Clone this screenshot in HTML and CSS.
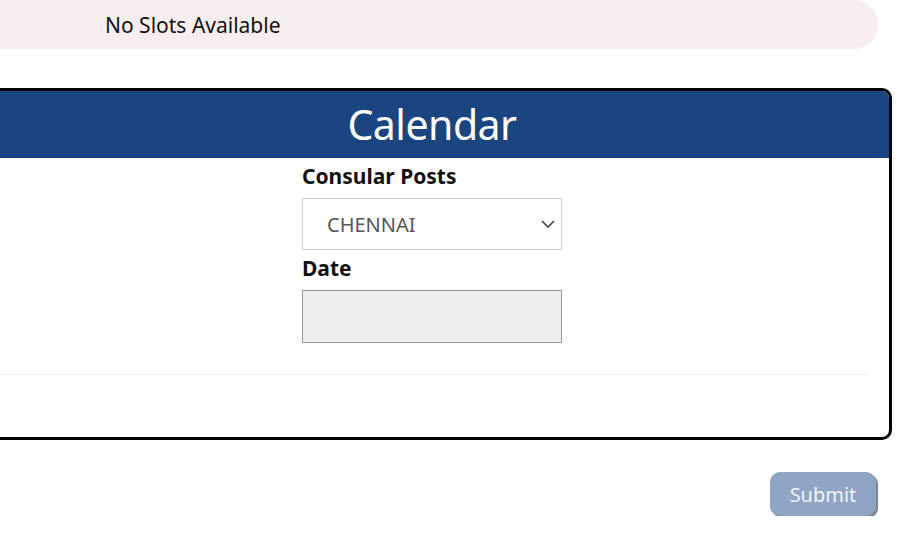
FILE: index.html
```html
<!DOCTYPE html>
<html lang="en">
<head>
  <meta charset="UTF-8" />
  <meta name="viewport" content="width=device-width, initial-scale=1.0"/>
  <title>Calendar</title>
  <link rel="stylesheet" href="styles.css">
</head>
<body>
  <div class="page">
    <div class="alert">No Slots Available</div>

    <div class="card">
      <div class="card-header">Calendar</div>
      <div class="card-body">
        <div class="form-col">
          <label class="field-label" for="post">Consular Posts</label>
          <div class="select-wrap">
            <select id="post" class="field">
              <option>CHENNAI</option>
            </select>
            <svg class="chevron" width="14" height="8" viewBox="0 0 14 8">
              <path d="M1 1l6 6 6-6" fill="none" stroke="#444" stroke-width="1.6"/>
            </svg>
          </div>
          <label class="field-label" for="date">Date</label>
          <input id="date" type="text" class="field date-field" disabled />
        </div>
        <hr class="divider" />
      </div>
    </div>

    <div class="actions">
      <button class="submit-btn" disabled>Submit</button>
    </div>
  </div>
</body>
</html>
```

FILE: styles.css
```css
body {
  margin: 0;
  font-family: 'Noto Sans', 'Open Sans', sans-serif;
  background: #fff;
  color: #111;
  overflow: hidden;
}
.page {
  margin-left: -28px;
  width: 920px;
}
.alert {
  width: 906px;
  height: 49px;
  box-sizing: border-box;
  padding: 11px 0 0 133px;
  background: #f9eeef;
  border-radius: 0 24px 24px 0;
  font-size: 21px;
  line-height: 28px;
}
.card {
  margin-top: 39px;
  border: 3px solid #000;
  border-radius: 10px;
  overflow: hidden;
  height: 352px;
  box-sizing: border-box;
}
.card-header {
  background: #1b4580;
  color: #fff;
  text-align: center;
  font-size: 41px;
  line-height: 67px;
  height: 67px;
  letter-spacing: -0.5px;
}
.card-body {
  padding: 4px 21px 0 21px;
}
.form-col {
  width: 260px;
  margin: 0 auto;
  display: flex;
  flex-direction: column;
}
.field-label {
  font-weight: 700;
  font-size: 21px;
  line-height: 28px;
}
.select-wrap {
  position: relative;
  margin: 8px 0 4px;
}
.field {
  width: 260px;
  height: 52px;
  box-sizing: border-box;
  font-family: inherit;
  font-size: 20px;
}
select.field {
  appearance: none;
  -webkit-appearance: none;
  background: #fff;
  border: 1px solid #ccc;
  border-radius: 0;
  color: #555;
  padding: 0 0 0 24px;
}
.chevron {
  position: absolute;
  right: 7px;
  top: 22px;
}
.date-field {
  margin-top: 8px;
  height: 53px;
  background: #eee;
  border: 1px solid #999;
}
.divider {
  border: none;
  border-top: 1px solid #eee;
  margin: 31px 0 0;
}
.actions {
  display: flex;
  justify-content: flex-end;
  padding: 32px 16px 0 0;
}
.submit-btn {
  width: 106px;
  height: 44px;
  background: #8fa5c3;
  color: #f0f3f8;
  border: none;
  border-radius: 10px;
  box-shadow: 2px 2px 0 #7d8590;
  font-family: inherit;
  font-size: 20px;
  padding: 0;
}
```
